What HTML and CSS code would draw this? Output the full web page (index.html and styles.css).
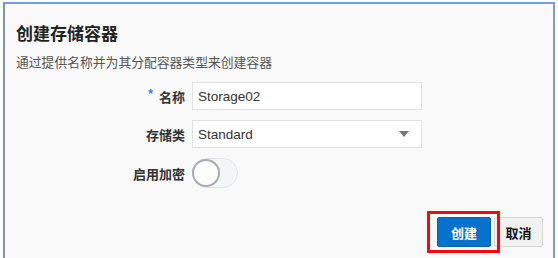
FILE: index.html
```html
<!DOCTYPE html>
<html lang="zh">
<head>
    <meta charset="UTF-8">
    <title>创建存储容器</title>
    <link rel="stylesheet" href="styles.css">
</head>
<body>
    <div class="dialog">
        <h2 class="dialog-title">创建存储容器</h2>
        <p class="dialog-desc">通过提供名称并为其分配容器类型来创建容器</p>
        <div class="form-grid">
            <label class="form-label" for="name"><span class="req">*</span>名称</label>
            <div class="text-field" id="name">Storage02</div>

            <label class="form-label" for="storageClass">存储类</label>
            <div class="select-field" id="storageClass">
                <span>Standard</span>
                <svg class="caret" width="10" height="6" viewBox="0 0 10 6"><path d="M0 0 L10 0 L5 6 Z" fill="#7a7a7a"/></svg>
            </div>

            <label class="form-label" for="encrypt">启用加密</label>
            <div class="switch" id="encrypt"><span class="knob"></span></div>
        </div>
        <div class="footer">
            <div class="primary-wrap">
                <button class="btn btn-primary">创建</button>
                <span class="highlight"></span>
            </div>
            <button class="btn btn-cancel">取消</button>
        </div>
    </div>
</body>
</html>
```

FILE: styles.css
```css
body {
    margin: 0;
    background-color: #ffffff;
    font-family: "Liberation Sans", "Noto Sans CJK SC", sans-serif;
}
.dialog {
    margin: 2px 3px 0 3px;
    height: 256px;
    box-sizing: border-box;
    border-top: 2px solid #7a9dd6;
    border-right: 2px solid #7a9dd6;
    border-left: 2px solid #8193b3;
    background-color: #f9f9f9;
    padding: 21px 10px 0 11px;
}
.dialog-title {
    margin: 0;
    font-size: 17px;
    line-height: 20px;
    font-weight: bold;
    color: #222;
}
.dialog-desc {
    margin: 10px 0 0 0;
    font-size: 12.8px;
    line-height: 16px;
    color: #555;
}
.form-grid {
    display: grid;
    grid-template-columns: 169px 230px;
    column-gap: 7px;
    row-gap: 10px;
    align-items: center;
    margin-top: 11px;
}
.form-label {
    text-align: right;
    font-size: 13px;
    font-weight: bold;
    color: #333;
}
.req {
    color: #3a7be0;
    font-size: 12px;
    position: relative;
    top: -4px;
    margin-right: 6px;
}
.text-field,
.select-field {
    height: 28px;
    box-sizing: border-box;
    background-color: #fff;
    border: 1px solid #e1e1e1;
    padding: 0 12px 0 5px;
    font-size: 13.5px;
    color: #333;
    display: flex;
    align-items: center;
}
.select-field {
    justify-content: space-between;
}
.switch {
    width: 46px;
    height: 30px;
    box-sizing: border-box;
    border: 1px solid #dfe3e8;
    border-radius: 15px;
    background-color: #f4f5f7;
    display: flex;
    align-items: center;
}
.knob {
    width: 28px;
    height: 28px;
    box-sizing: border-box;
    border-radius: 50%;
    border: 2px solid #a8acb2;
    background-color: #fcfcfd;
    margin-left: -1px;
}
.footer {
    display: flex;
    justify-content: flex-end;
    gap: 3px;
    margin-top: 29px;
}
.primary-wrap {
    position: relative;
}
.btn {
    height: 30px;
    font-family: inherit;
    font-size: 13px;
    font-weight: bold;
    border-radius: 2px;
    cursor: pointer;
}
.btn-primary {
    width: 54px;
    background-color: #0572ce;
    border: 1px solid #0462b4;
    color: #fff;
}
.btn-cancel {
    width: 49px;
    background-color: #f1f1f1;
    border: 1px solid #d6d6d6;
    color: #111;
    padding: 0;
}
.highlight {
    position: absolute;
    left: -10px;
    top: -6px;
    right: -9px;
    bottom: -6px;
    border: 3px solid #ec0c14;
    pointer-events: none;
}
```
